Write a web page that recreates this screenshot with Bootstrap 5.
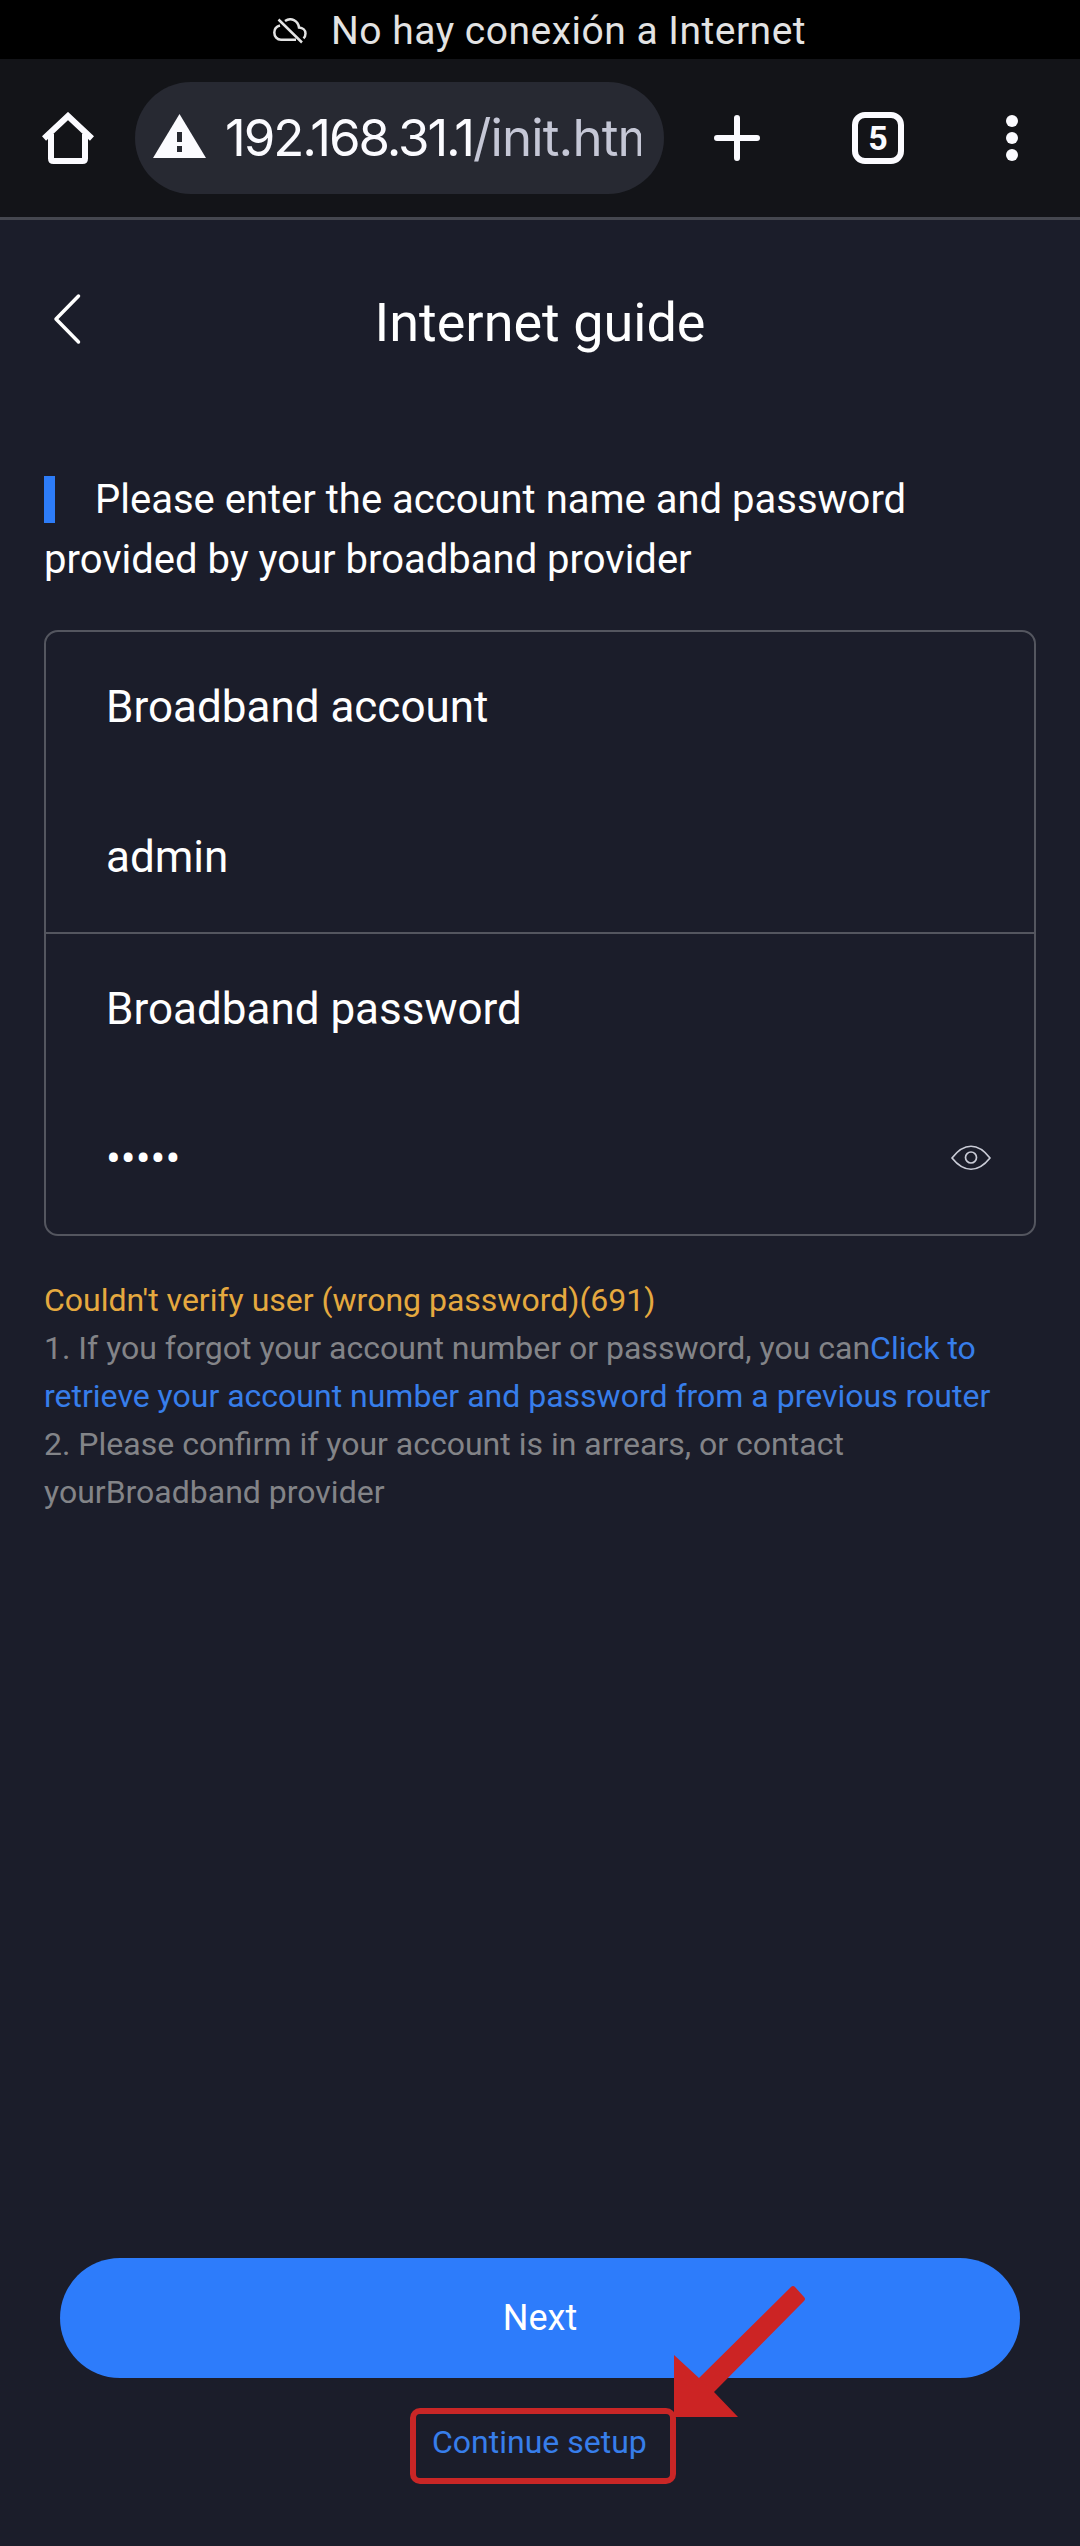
<!DOCTYPE html>
<html lang="en" data-bs-theme="dark">
<head>
<meta charset="utf-8">
<meta name="viewport" content="width=device-width, initial-scale=1">
<title>Internet guide</title>
<link href="https://cdn.jsdelivr.net/npm/bootstrap@5.3.0/dist/css/bootstrap.min.css" rel="stylesheet">
<style>
  body { font-family: Roboto, "Noto Sans", sans-serif; background: #1b1d2a; color: #fff; }
  svg { display: block; flex: none; }
  .phone { width: 1080px; height: 2546px; overflow: hidden; }
  .status { height: 59px; background: #000; color: #e3e3e3; padding-left: 273px; padding-top: 3px; font-size: 39px; line-height: 56px; letter-spacing: .5px; }
  .status svg { margin-top: -1px; }
  .status span { margin-left: 24px; white-space: nowrap; }
  .browser { height: 161px; background: #131418; border-bottom: 3px solid #45474f; padding: 0 60px 0 42px; color: #fbfbff; }
  .omnibox { width: 529px; height: 112px; margin-left: 41px; padding: 0 23px 0 18px; background: #272932; }
  .omnibox svg { margin-top: -5px; }
  .address { margin-left: 19px; padding-bottom: 1px; font-family: Inter, Roboto, sans-serif; font-size: 51px; line-height: 64px; letter-spacing: -2.1px; white-space: nowrap; overflow: hidden; }
  .address .path { color: #c5c7d6; letter-spacing: -.85px; }
  .new-tab { margin-left: 50px; }
  .tab-count { width: 52px; height: 52px; margin-left: 92px; border: 6px solid; border-radius: 13px; font-size: 34px; line-height: 41px; font-weight: 700; }
  .topbar { height: 206px; padding: 0 44px; }
  .topbar h1 { font-size: 54px; line-height: 72px; font-weight: 400; }
  .side { width: 60px; padding-left: 9px; }
  .side svg { margin-top: -9px; }
  .content { padding: 44px 44px 0; }
  .prompt { font-size: 40px; line-height: 60px; margin-bottom: 40px; }
  .tick { display: inline-block; width: 11px; height: 47px; margin-right: 40px; background: #2d7cf8; vertical-align: -10px; }
  .fields { border: 2px solid #54565f; border-radius: 14px; }
  .fields .list-group-item { background: transparent; color: #fff; border: 0; padding: 0 43px 0 60px; font-size: 44px; line-height: 150px; }
  .fields .list-group-item + .list-group-item { border-top: 2px solid #54565f; }
  .fields svg { margin-top: -2px; }
  .notes { margin-top: 40px; font-size: 32px; line-height: 48px; color: #838488; }
  .notes p { margin: 0; }
  .warn { color: #e5a93f; }
  .notes a, .continue { color: #377eea; text-decoration: none; }
  .actions { padding: 0 60px 62px; }
  .btn-next { height: 120px; background: #2d7cfb; border: 0; color: #fff; font-size: 36px; }
  .continue { width: 266px; height: 76px; margin: 30px 0 0 6px; padding: 0 0 8px 16px; border: 6px solid #c92626; border-radius: 10px; font-size: 32px; white-space: nowrap; }
  .pointer { left: 672px; top: 2284px; }
</style>
</head>
<body>
<div class="phone d-flex flex-column position-relative">
  <div class="status d-flex align-items-center">
    <svg width="34" height="26" viewBox="0 0 34 26" fill="none" stroke="#e3e3e3" stroke-width="2.5"><path d="M7 7.5C3 8.5 1.3 11 1.3 14.5c0 4 2.8 7.3 6.7 7.3h15M12 3C18-1 25 2.5 26 9.5c4 .2 6.500 3 6.500 6 0 2-.7 3.600-2 4.800M5.500 1.500 29 24.500"/></svg>
    <span>No hay conexión a Internet</span>
  </div>

  <nav class="browser d-flex align-items-center">
    <svg width="52" height="52" viewBox="0 0 52 52" fill="none" stroke="currentColor" stroke-width="6" stroke-linejoin="round"><path d="M2 26.500 26 4l24 22.500" stroke-linejoin="miter"/><path d="M9 22v24.500q0 2.500 2.500 2.500h29q2.500 0 2.500-2.500V22"/></svg>
    <div class="omnibox rounded-pill d-flex align-items-center">
      <svg width="53" height="44" viewBox="0 0 53 44"><path fill="currentColor" d="M26.500 0 53 44H0z"/><path fill="#272932" d="M24 18h5v10h-5zM24 32h5v6h-5z"/></svg>
      <div class="address flex-grow-1">192.168.31.1<span class="path">/init.html</span></div>
    </div>
    <svg class="new-tab" width="46" height="46" viewBox="0 0 46 46" stroke="currentColor" stroke-width="6" stroke-linecap="round"><path d="M23 3v40M3 23h40"/></svg>
    <div class="tab-count text-center">5</div>
    <svg class="ms-auto" width="16" height="50" viewBox="0 0 16 50" fill="currentColor"><circle cx="8" cy="8" r="6"/><circle cx="8" cy="25" r="6"/><circle cx="8" cy="42" r="6"/></svg>
  </nav>

  <header class="topbar d-flex align-items-center justify-content-between">
    <div class="side"><svg width="30" height="52" viewBox="0 0 30 52" fill="none" stroke="#fff" stroke-width="3.500" stroke-linecap="round" stroke-linejoin="round"><path d="M25.500 3 3 26l22.500 23"/></svg></div>
    <h1 class="m-0">Internet guide</h1>
    <div class="side"></div>
  </header>

  <main class="content flex-grow-1">
    <p class="prompt"><i class="tick"></i>Please enter the account name and password provided by your broadband provider</p>

    <div class="list-group fields">
      <div class="list-group-item">
        <div>Broadband account</div>
        <div>admin</div>
      </div>
      <div class="list-group-item">
        <div>Broadband password</div>
        <div class="d-flex align-items-center justify-content-between">
          <span>•••••</span>
          <svg width="40" height="26" viewBox="0 0 40 26" fill="none" stroke="#c9cbd6" stroke-width="1.700" stroke-linejoin="round"><path d="M1 13C13-2.700 27-2.700 39 13 27 28 13 28 1 13z"/><circle cx="20" cy="12.500" r="5.500"/></svg>
        </div>
      </div>
    </div>

    <div class="notes">
      <p class="warn">Couldn't verify user (wrong password)(691)</p>
      <p>1. If you forgot your account number or password, you can<a href="#">Click to retrieve your account number and password from a previous router</a></p>
      <p>2. Please confirm if your account is in arrears, or contact yourBroadband provider</p>
    </div>
  </main>

  <footer class="actions d-flex flex-column align-items-center">
    <button type="button" class="btn btn-next rounded-pill w-100">Next</button>
    <a href="#" class="continue d-flex align-items-center">Continue setup</a>
  </footer>

  <svg class="pointer position-absolute" width="136" height="136" viewBox="672 2284 136 136" fill="#cc2424"><path d="M674 2355l25 23 92-91q2-2 4 0l9 10q2 2 0 4l-90 91 24 25h-64z"/></svg>
</div>
<script src="https://cdn.jsdelivr.net/npm/bootstrap@5.3.0/dist/js/bootstrap.bundle.min.js"></script>
</body>
</html>
